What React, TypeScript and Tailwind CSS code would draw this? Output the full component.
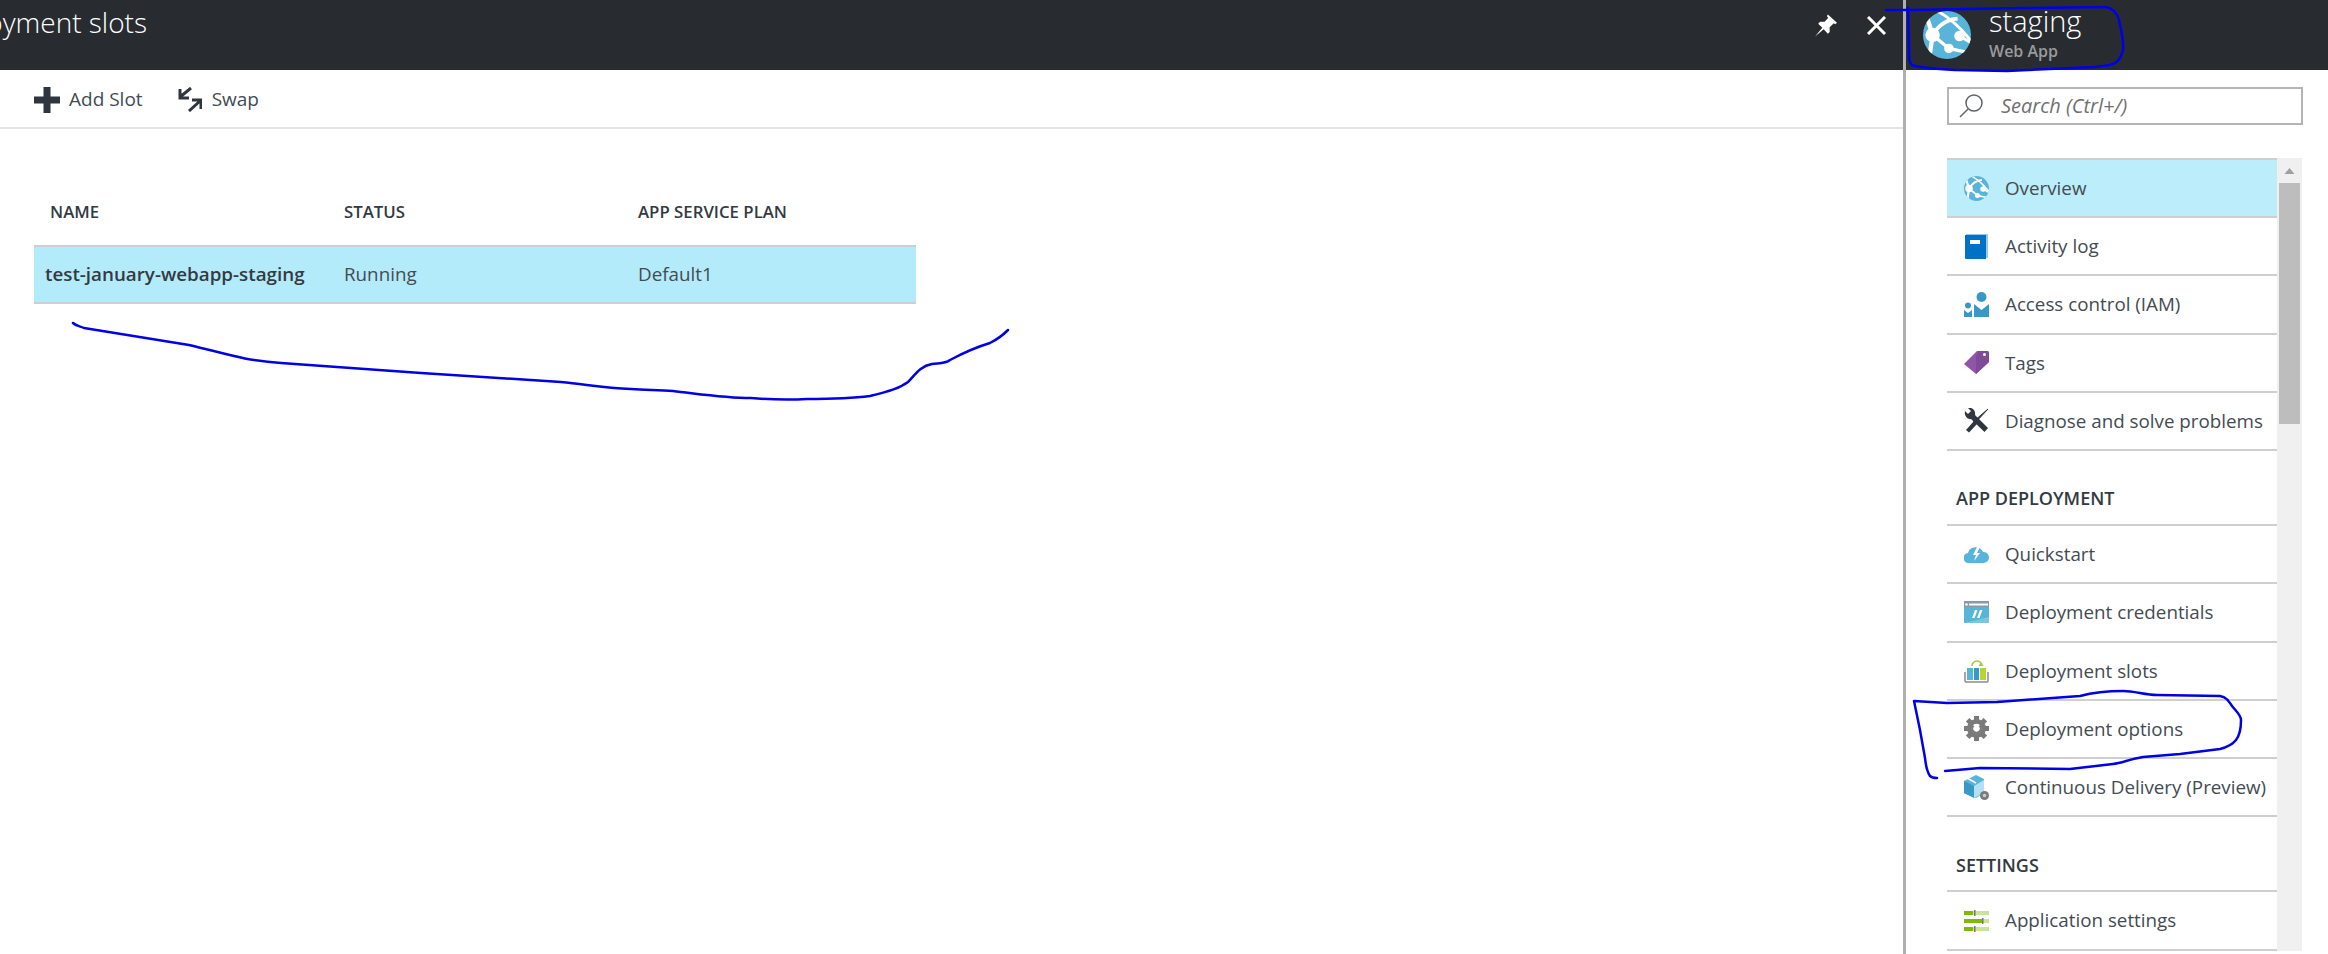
import type { ReactNode } from "react";

const FONT = "font-['Open_Sans','Noto_Sans',sans-serif]";

function AppLogo({ className }: { className: string }) {
  return (
    <svg viewBox="0 0 50 50" className={className}>
      <defs>
        <clipPath id="logo-clip">
          <circle cx="25" cy="25" r="25" />
        </clipPath>
      </defs>
      <circle cx="25" cy="25" r="25" fill="#59b4d9" />
      <g clipPath="url(#logo-clip)" fill="none" stroke="#fff" strokeWidth="3.6">
        <path d="M4 6 L10 25 L7 46" strokeWidth="4.5" />
        <path d="M10 25 C16 15 24 9 36 8" strokeWidth="4" />
        <path d="M15 0 C26 6 38 16 50 31" strokeWidth="3" />
        <path d="M10 25 L27 39 L46 43" strokeWidth="3.5" />
        <path d="M38 26 L50 33" strokeWidth="3" />
      </g>
      <circle cx="10" cy="25" r="7.5" fill="#fff" />
      <circle cx="38" cy="26" r="5.5" fill="#fff" />
      <circle cx="27" cy="39" r="5" fill="#fff" />
    </svg>
  );
}

function ActivityIcon() {
  return (
    <svg viewBox="0 0 25 25" className="h-[25px] w-[25px]">
      <path d="M2 0h22v24H2z" fill="#9cc8e8" />
      <path d="M1 1h21v24H2a1 1 0 0 1-1-1z" fill="#0072c6" />
      <path d="M6 6h10v4H6z" fill="#fff" />
    </svg>
  );
}

function AccessIcon() {
  return (
    <svg viewBox="0 0 25 25" className="h-[25px] w-[25px]" fill="#3999c6">
      <circle cx="17.5" cy="5" r="5" />
      <path d="M10 12l7.5 6 7.500-6v13H10z" />
      <circle cx="4" cy="13.500" r="3" />
      <path d="M0 18l4 3 4-3v7H0z" />
    </svg>
  );
}

function TagIcon() {
  return (
    <svg viewBox="0 0 25 25" className="h-[25px] w-[25px]">
      <path d="M12 24L0 14 13 1h11l1 2v9z" fill="#9155a7" />
      <path d="M12 24V6l3-5h9l1 2v9z" fill="#7f4a97" />
      <circle cx="20.500" cy="4.500" r="1.500" fill="#fff" />
    </svg>
  );
}

function ToolsIcon() {
  return (
    <svg viewBox="0 0 25 25" className="h-[25px] w-[25px]" fill="#2f3640">
      <path d="M24 1L11 15l-1.500-1.500z" stroke="#2f3640" strokeWidth="1" />
      <path d="M2 22l8-9 3 3-8 8.500z" />
      <path d="M1 3l3 3 3-3-3-3c4-1 8 2 7 7l13 13-3.500 4L7 11C3 12 0 7 1 3z" />
    </svg>
  );
}

function CloudIcon() {
  return (
    <svg viewBox="0 0 25 17" className="h-[17px] w-[25px]">
      <path d="M5 17a5 5 0 0 1-1-10 8 8 0 0 1 15-1 5.500 5.500 0 0 1 1 11z" fill="#59b4d9" />
      <path d="M13 1l-4 8h3l-2 6 6-8h-3l3-6z" fill="#fff" />
    </svg>
  );
}

function CredentialsIcon() {
  return (
    <svg viewBox="0 0 25 22" className="h-[22px] w-[25px]">
      <path d="M0 0h25v22H0z" fill="#59b4d9" />
      <path d="M0 0h25v6H0z" fill="#8a9aa3" />
      <path d="M5 2.500h19v2H5z" fill="#fff" />
      <circle cx="2.500" cy="3.500" r="1.300" fill="#fff" />
      <path d="M0 22L25 16v6z" fill="#7cc4e2" />
      <path d="M11 9h2.500l-3 8H8zM16 9h2.500l-3 8H13z" fill="#fff" />
    </svg>
  );
}

function SlotsIcon() {
  return (
    <svg viewBox="0 0 25 25" className="h-[25px] w-[25px]">
      <path d="M8 8a5 5 0 0 1 10 0" fill="none" stroke="#a4c936" strokeWidth="1.600" />
      <path d="M16 5l4 3h-5z" fill="#a4c936" />
      <path d="M3 10h6v12H3z" fill="#59b4d9" />
      <path d="M10 10h5v12h-5z" fill="#3999c6" />
      <path d="M16 10h6v12h-6z" fill="#b8d432" />
      <path d="M1 14v9a1 1 0 0 0 1 1h21a1 1 0 0 0 1-1v-9" fill="none" stroke="#8a8a8a" strokeWidth="1.500" />
    </svg>
  );
}

function GearIcon() {
  return (
    <svg viewBox="0 0 25 25" className="h-[25px] w-[25px]" fill="#7a7a7a">
      <circle cx="12.500" cy="12.500" r="9.500" />
      {[0, 45, 90, 135, 180, 225, 270, 315].map((deg) => (
        <rect key={deg} x="10" y="0" width="5" height="5" transform={`rotate(${deg} 12.500 12.500)`} />
      ))}
      <circle cx="12.500" cy="12.500" r="4.800" fill="#fff" />
      <path d="M9.500 9.500a4.200 4.200 0 1 0 6 0" fill="none" stroke="#7a7a7a" strokeWidth="2" />
    </svg>
  );
}

function DeliveryIcon() {
  return (
    <svg viewBox="0 0 25 25" className="h-[25px] w-[25px]">
      <path d="M0 6l12-6 8 4v14l-8 5-12-5z" fill="#59b4d9" />
      <path d="M0 6l10 5v12L0 18z" fill="#3999c6" />
      <path d="M10 11l10-6v13l-10 5z" fill="#b3e0f2" />
      <path d="M3 3l9 5" stroke="#fff" strokeWidth="1.500" />
      <circle cx="20.500" cy="20.500" r="4.500" fill="#7a7a7a" />
      <circle cx="20.500" cy="20.500" r="1.800" fill="#ccc" />
    </svg>
  );
}

function SettingsIcon() {
  return (
    <svg viewBox="0 0 25 22" className="h-[22px] w-[25px]">
      <path d="M0 1h25v4H0zM0 9h25v4H0zM0 17h25v4H0z" fill="#cbe29a" />
      <path d="M0 1h9v4H0zM0 9h18v4H0zM0 17h9v4H0z" fill="#7fba00" />
      <path d="M10 0h1.500v6H10zM18 8h1.500v6H18zM10 16h1.500v6H10z" fill="#777" />
    </svg>
  );
}

type MenuRow = { label: string; icon: ReactNode; active?: boolean };

const topRows: MenuRow[] = [
  { label: "Overview", icon: <AppLogo className="h-[25px] w-[25px]" />, active: true },
  { label: "Activity log", icon: <ActivityIcon /> },
  { label: "Access control (IAM)", icon: <AccessIcon /> },
  { label: "Tags", icon: <TagIcon /> },
  { label: "Diagnose and solve problems", icon: <ToolsIcon /> },
];

const deployRows: MenuRow[] = [
  { label: "Quickstart", icon: <CloudIcon /> },
  { label: "Deployment credentials", icon: <CredentialsIcon /> },
  { label: "Deployment slots", icon: <SlotsIcon /> },
  { label: "Deployment options", icon: <GearIcon /> },
  { label: "Continuous Delivery (Preview)", icon: <DeliveryIcon /> },
];

function Row({ row, tall }: { row: MenuRow; tall?: boolean }) {
  return (
    <div
      className={`flex items-center border-b-2 border-[#cfcfcf] pl-[17px] ${tall ? "h-[58.3px]" : "h-[58.2px]"} ${
        row.active ? "bg-[#bcedfb]" : ""
      }`}
    >
      <span className="flex w-[41px] shrink-0 items-center">{row.icon}</span>
      <span className="whitespace-nowrap text-[18.800px] text-[#444b52]">{row.label}</span>
    </div>
  );
}

function SectionHead({ title }: { title: string }) {
  return (
    <div className="flex h-[75px] items-center border-b-2 border-[#cfcfcf] pl-[9px] pt-[23px] text-[18px] font-semibold text-[#333a42]">
      {title}
    </div>
  );
}

function Annotations() {
  return (
    <svg className="pointer-events-none absolute left-0 top-0 h-[954px] w-[2328px]" viewBox="0 0 2328 954" fill="none" stroke="#0000e6" strokeWidth="2.500" strokeLinecap="round" strokeLinejoin="round">
      <path d="M73 323 C76 326 80 326 84 328 L189 345 C220 352 245 361 281 363 L421 373 L561 382 C590 385 605 388 631 389 C650 390 660 390 673 391 C700 394 725 398 751 398 C775 400 790 400 807 399 C835 399 855 398 870 396 C890 391 900 388 908 382 C915 375 920 366 932 364 C938 363 945 364 950 360 C965 352 980 346 990 343 C1000 338 1005 333 1008 330" />
      <path d="M1886 10 L1909 10 L2025 8 L2105 7 C2112 8 2117 12 2119 20 C2121 30 2124 40 2123 50 C2121 58 2118 63 2110 65 L2095 67 L2007 71 L1955 70 C1935 69 1920 68 1912 65 C1909 62 1909 60 1909 50 L1908 8" />
      <path d="M1937 778 C1934 778 1932 778 1930 776 C1926 770 1926 765 1925 758 L1920 730 L1914 701 L1947 703 L1997 702 L2080 696 C2095 692 2110 691 2123 691 C2135 691 2145 695 2157 695 L2220 696 C2226 697 2228 700 2232 706 C2236 711 2241 715 2241 720 C2241 728 2240 735 2236 740 C2232 745 2228 747 2220 749 L2180 754 L2143 757 C2130 759 2122 763 2113 764 L2070 769 L1980 768 L1945 771" />
    </svg>
  );
}

export default function App() {
  return (
    <div className={`relative flex h-[954px] w-[2328px] overflow-hidden bg-white ${FONT}`}>
      {/* Deployment slots blade */}
      <div className="flex w-[1903px] shrink-0 flex-col">
        <div className="flex h-[70px] items-center justify-between bg-[#282c31]">
          <div className="mb-[27px] flex w-[147px] justify-end overflow-hidden whitespace-nowrap text-[28px] font-light text-white">
            Deployment slots
          </div>
          <div className="mb-[20px] mr-[17px] flex items-center gap-[30px]">
            <svg viewBox="0 0 24 24" className="h-[23px] w-[22px]" fill="#fff">
              <path d="M14 0L24 9L22 10.500L20.500 9.500L16 14L16 19L14 21L9.500 16L0 24L8 14.500L3.500 10L5.500 8L10.500 8L14.500 3.500L13 2Z" />
            </svg>
            <svg viewBox="0 0 19 19" className="h-[19px] w-[19px]" stroke="#fff" strokeWidth="3">
              <path d="M1 1l17 17M18 1L1 18" />
            </svg>
          </div>
        </div>

        <div className="flex h-[59px] items-center border-b-2 border-[#e4e4e4] pl-[34px] pt-[2px] text-[19px] text-[#444b52]">
          <svg viewBox="0 0 26 26" className="h-[26px] w-[26px]" fill="#2f3640">
            <path d="M9.500 0h7v9.500H26v7h-9.500V26h-7v-9.500H0v-7h9.500z" />
          </svg>
          <span className="ml-[9px]">Add Slot</span>
          <svg viewBox="0 0 25 25" className="ml-[34px] h-[25px] w-[25px]" fill="none" stroke="#2f3640" strokeWidth="3">
            <path d="M14 1L3 10M3 2v9h9M12 24l11-10M15 13h9v9" />
          </svg>
          <span className="ml-[10px]">Swap</span>
        </div>

        <div className="pl-[34px] pt-[63px]">
          <div className="grid h-[40px] w-[882px] grid-cols-[310px_294px_278px] items-center text-[16.800px] font-semibold text-[#333a42]">
            <span className="pl-[16px]">NAME</span>
            <span>STATUS</span>
            <span>APP SERVICE PLAN</span>
          </div>
          <div className="mt-[13px] grid h-[59px] w-[882px] grid-cols-[310px_294px_278px] items-center border-y-2 border-[#cfcfcf] bg-[#b3ebfb] text-[18.800px] text-[#444b52]">
            <span className="whitespace-nowrap pl-[11px] font-semibold text-[#333a42]">test-january-webapp-staging</span>
            <span>Running</span>
            <span>Default1</span>
          </div>
        </div>
      </div>

      {/* Resource menu blade */}
      <div className="flex flex-1 flex-col border-l-[3px] border-[#b0b0b0]">
        <div className="flex h-[70px] items-center gap-[18px] bg-[#282c31] pl-[17px]">
          <AppLogo className="h-[50px] w-[48px]" />
          <div className="flex flex-col gap-[3px] pb-[6px]">
            <span className="text-[29px] font-light leading-[34px] text-white">staging</span>
            <span className="text-[16px] font-semibold leading-[20px] text-[#9a9a9a]">Web App</span>
          </div>
        </div>

        <div className="pl-[41px] pr-[26px]">
          <div className="mt-[17px] flex h-[38px] items-center border-2 border-[#b5b5b5] pl-[10px]">
            <svg viewBox="0 0 24 24" className="h-[24px] w-[24px] shrink-0" fill="none" stroke="#5f6468" strokeWidth="1.500">
              <circle cx="15" cy="9" r="8" />
              <path d="M9 15L1 23" />
            </svg>
            <input
              placeholder="Search (Ctrl+/)"
              className="ml-[18px] w-[300px] bg-transparent text-[20px] italic outline-none placeholder:text-[#707070]"
            />
          </div>

          <div className="mt-[33px] flex">
            <div className="w-[330px] shrink-0">
              <div className="border-t-2 border-[#cfcfcf]">
                {topRows.map((row) => (
                  <Row key={row.label} row={row} />
                ))}
              </div>
              <SectionHead title="APP DEPLOYMENT" />
              {deployRows.map((row) => (
                <Row key={row.label} row={row} tall />
              ))}
              <SectionHead title="SETTINGS" />
              <Row row={{ label: "Application settings", icon: <SettingsIcon /> }} tall />
            </div>
            <div className="flex w-[25px] flex-col items-center bg-[#f0f0f0]">
              <svg viewBox="0 0 10 6" className="mt-[10px] h-[6px] w-[11px]" fill="#a0a0a0">
                <path d="M5 0l5 6H0z" />
              </svg>
              <div className="mt-[9px] h-[241px] w-[21px] bg-[#bdbdbd]" />
            </div>
          </div>
        </div>
      </div>

      <Annotations />
    </div>
  );
}
